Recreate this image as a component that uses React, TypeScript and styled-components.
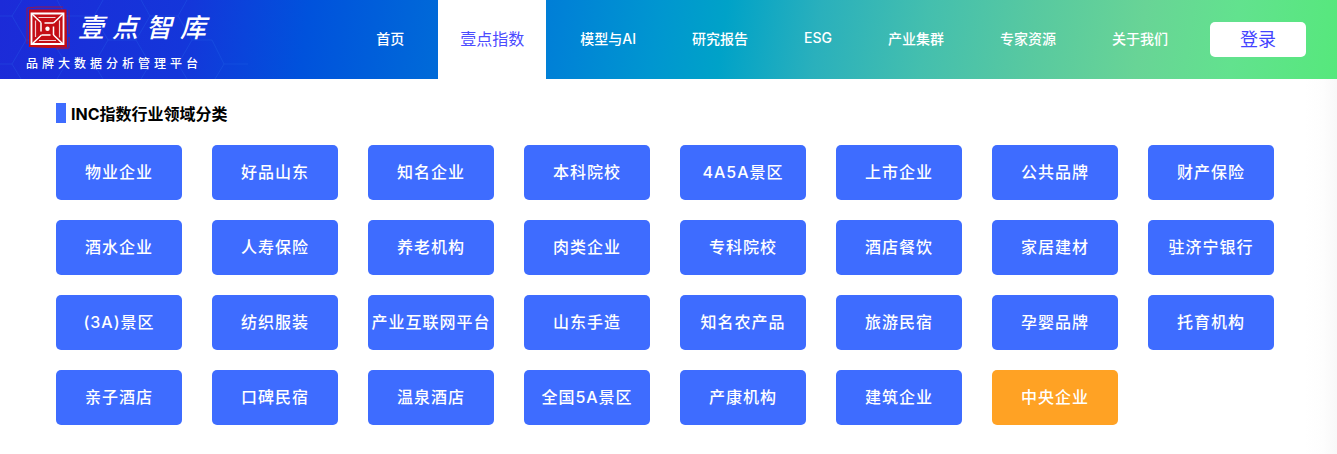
import React from "react";
import styled, { createGlobalStyle } from "styled-components";

const GlobalStyle = createGlobalStyle`
  * { box-sizing: border-box; }
  body {
    margin: 0;
    background: #fff;
    color: #000;
    font-family: Inter, "Noto Sans CJK SC", sans-serif;
  }
`;

const Page = styled.div`
  min-height: 100vh;
  display: flex;
  flex-direction: column;
`;

const Header = styled.header`
  position: relative;
  display: flex;
  align-items: stretch;
  justify-content: space-between;
  height: 79px;
  padding: 0 31px 0 26px;
  overflow: hidden;
  background: linear-gradient(
    98deg,
    #1c2bd8 0%,
    #1436da 14%,
    #0052dc 23%,
    #006ad8 33%,
    #0082d6 42%,
    #0096d0 49%,
    #00a2c8 54%,
    #2ab0bc 61%,
    #44bfae 69%,
    #58c9a0 77%,
    #68d496 85%,
    #62e28e 92%,
    #56e87c 100%
  );
`;

const Pattern = styled.svg`
  position: absolute;
  left: 0;
  top: 0;
  width: 320px;
  height: 79px;
`;

const Brand = styled.a`
  position: relative;
  display: flex;
  flex-direction: column;
  color: #fff;
  text-decoration: none;
  white-space: nowrap;
`;

const BrandTop = styled.span`
  display: flex;
  align-items: center;
  gap: 8px;
  height: 55px;
`;

const Seal = styled.svg`
  width: 44px;
  height: 44px;
`;

const BrandName = styled.span`
  font-size: 26px;
  line-height: 40px;
  font-style: italic;
  font-weight: 500;
  letter-spacing: 8px;
`;

const Tagline = styled.span`
  font-size: 12px;
  line-height: 18px;
  font-weight: 500;
  letter-spacing: 4px;
`;

const Nav = styled.nav`
  position: relative;
  display: flex;
  align-items: stretch;
  gap: 12px;
  white-space: nowrap;
`;

const NavLink = styled.a<{ $active?: boolean }>`
  display: flex;
  align-items: center;
  padding: 0 22px 4px;
  text-decoration: none;
  font-weight: ${(p) => (p.$active ? 400 : 500)};
  font-size: ${(p) => (p.$active ? 16 : 14)}px;
  color: ${(p) => (p.$active ? "#4b4bff" : "#fff")};
  background: ${(p) => (p.$active ? "#fff" : "transparent")};
`;

const LoginButton = styled.button`
  align-self: center;
  width: 96px;
  height: 35px;
  margin-left: 8px;
  padding: 0 0 4px;
  border: 0;
  border-radius: 5px;
  background: #fff;
  color: #4343ff;
  font: inherit;
  font-size: 18px;
  cursor: pointer;
`;

const Main = styled.main`
  flex: 1;
  padding: 24px 56px 29px;
  background: linear-gradient(to left, #f8f8f8, #fdfdfd 14px, #fff 32px);
`;

const Title = styled.h1`
  display: flex;
  gap: 5px;
  margin: 0 0 20px;
  font-size: 16px;
  line-height: 22px;
  font-weight: 700;

  &::before {
    content: "";
    width: 10px;
    height: 20px;
    background: #3e6cff;
  }
`;

const Grid = styled.div`
  display: grid;
  grid-template-columns: repeat(auto-fill, 126px);
  gap: 20px 30px;
`;

const Tile = styled.button<{ $highlight: boolean }>`
  height: 55px;
  padding: 0 0 4px;
  border: 0;
  border-radius: 5px;
  background: ${(p) => (p.$highlight ? "#ffa224" : "#3e6cff")};
  color: #fff;
  font: inherit;
  font-size: 16px;
  font-weight: 500;
  letter-spacing: 1px;
  white-space: nowrap;
  cursor: pointer;
`;

const links = ["首页", "壹点指数", "模型与AI", "研究报告", "ESG", "产业集群", "专家资源", "关于我们"];
const activeLink = "壹点指数";

const categories = [
  "物业企业", "好品山东", "知名企业", "本科院校", "4A5A景区", "上市企业", "公共品牌", "财产保险",
  "酒水企业", "人寿保险", "养老机构", "肉类企业", "专科院校", "酒店餐饮", "家居建材", "驻济宁银行",
  "(3A)景区", "纺织服装", "产业互联网平台", "山东手造", "知名农产品", "旅游民宿", "孕婴品牌", "托育机构",
  "亲子酒店", "口碑民宿", "温泉酒店", "全国5A景区", "产康机构", "建筑企业", "中央企业",
];
const highlighted = "中央企业";

function HexPattern() {
  return (
    <Pattern viewBox="0 0 320 79" fill="none" stroke="#2f7cf0" strokeOpacity="0.22" aria-hidden="true">
      <path d="M0 16h12L22 0M12 16l14 24-14 24H0M12 64l9 15M26 40h26M52 40l14-24h28l14 24-14 24H66zM66 16L57 0M94 16l9-16M66 64l-9 15M94 64l9 15M108 40h28M136 40l14-24h28l14 24-14 24h-28zM150 16l-9-16M178 16l9-16M150 64l-9 15M178 64l9 15M192 40h20l12 24-9 15M224 64h24" />
    </Pattern>
  );
}

function SealMark() {
  return (
    <Seal viewBox="0 0 44 44" fill="none" aria-hidden="true">
      <path d="M1 38V2l10-1h26M43 4v24M43 31v11l-13 1" stroke="#b3122f" strokeOpacity="0.8" />
      <path d="M3 3.500h37.500l.5 38-19 .5-19-1z" fill="#c40d14" />
      <g stroke="#fff">
        <path d="M5.500 7.500h32v30.500h-32z" strokeWidth="1.8" />
        <path d="M6 8l9 8.500M37 8l-9.500 9M6 38l9.500-9M37 38l-9.500-9" strokeWidth="1.5" />
        <path d="M12.500 11.500h17M33.500 14.500v17M30 34.500H13M9.500 31V14.500" strokeWidth="1.2" strokeOpacity="0.8" />
        <path d="M27.500 17h-9M15 16.500v9M15.500 29h9M27.500 29v-8.500" strokeWidth="1.5" />
      </g>
      <circle cx="21.500" cy="22.800" r="2.200" fill="#fff" />
    </Seal>
  );
}

export default function App() {
  return (
    <Page>
      <GlobalStyle />
      <Header>
        <HexPattern />
        <Brand href="#">
          <BrandTop>
            <SealMark />
            <BrandName>壹点智库</BrandName>
          </BrandTop>
          <Tagline>品牌大数据分析管理平台</Tagline>
        </Brand>
        <Nav>
          {links.map((label) => (
            <NavLink key={label} href="#" $active={label === activeLink}>
              {label}
            </NavLink>
          ))}
          <LoginButton type="button">登录</LoginButton>
        </Nav>
      </Header>
      <Main>
        <Title>INC指数行业领域分类</Title>
        <Grid>
          {categories.map((name) => (
            <Tile key={name} type="button" $highlight={name === highlighted}>
              {name}
            </Tile>
          ))}
        </Grid>
      </Main>
    </Page>
  );
}
